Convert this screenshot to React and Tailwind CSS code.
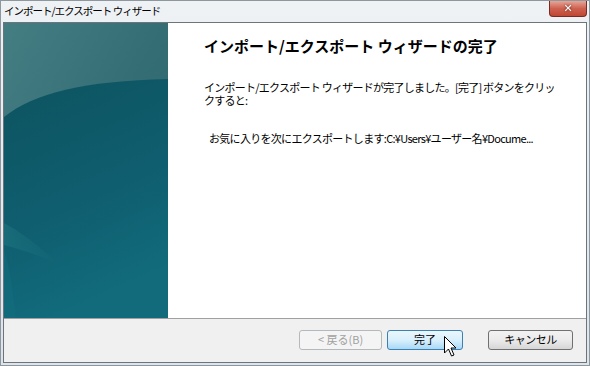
import React from "react";

const jp = { fontFamily: '"Noto Sans CJK JP", "Noto Sans", sans-serif' };

const WizardArt = () => (
  <svg viewBox="0 0 164 295" preserveAspectRatio="none" className="block w-full h-full">
    <defs>
      <linearGradient id="sky" x1="0" y1="0" x2="1" y2="1">
        <stop offset="0" stopColor="#447e83" />
        <stop offset="0.5" stopColor="#356d74" />
        <stop offset="1" stopColor="#2a636c" />
      </linearGradient>
      <linearGradient id="sea" x1="0" y1="0" x2="0.3" y2="1">
        <stop offset="0" stopColor="#0d5360" />
        <stop offset="0.6" stopColor="#0f5e6f" />
        <stop offset="1" stopColor="#116b7b" />
      </linearGradient>
      <linearGradient id="glow" x1="0" y1="0" x2="1" y2="0">
        <stop offset="0" stopColor="#2a848b" stopOpacity="0.35" />
        <stop offset="1" stopColor="#2a848b" stopOpacity="0" />
      </linearGradient>
    </defs>
    <rect width="164" height="295" fill="url(#sky)" />
    <path d="M0,94 C30,70 80,58 164,56 L164,295 L0,295 Z" fill="url(#sea)" />
    <path d="M0,200 C18,210 34,222 56,242 C34,232 16,226 0,222 Z" fill="url(#glow)" />
    <path d="M0,226 C8,255 10,278 12,295 L0,295 Z" fill="#137480" opacity="0.35" />
  </svg>
);

const Cursor = () => (
  <svg width="13" height="21" viewBox="0 0 13 21" className="absolute left-[443px] top-[335px]">
    <path d="M0.5,0.5 L0.5,17 L4.5,13 L7.5,20 L10,19 L7,12 L12,12 Z" fill="#fff" stroke="#000" strokeWidth="1" strokeLinejoin="miter" />
  </svg>
);

export default function App() {
  return (
    <div className="relative w-[590px] h-[366px] flex flex-col bg-gradient-to-b from-[#eef2f5] to-[#dde4ea] border border-[#8f979e]" style={jp}>
      <div className="h-[21px] flex items-start justify-between pl-[3px]">
        <span className="text-[10.5px] leading-[20px] text-black tracking-[-1px] whitespace-nowrap">インポート/エクスポート ウィザード</span>
        <div className="mr-[2px] w-[38px] h-[16px] rounded-b-[4px] border border-t-0 border-[#7a2a22] bg-gradient-to-b from-[#e6a597] via-[#cd6150] to-[#c04632] flex items-center justify-center">
          <span className="text-white text-[11px] font-bold leading-none drop-shadow-[0_0_1px_#5a1a12]" style={{ fontFamily: '"DejaVu Sans", sans-serif' }}>✕</span>
        </div>
      </div>
      <div className="flex-1 mx-[2px] mb-[2px] border border-[#6d757c] bg-white flex flex-col">
        <div className="flex-1 flex">
          <div className="w-[164px]">
            <WizardArt />
          </div>
          <div className="flex-1 pl-[36px] pt-[13px] text-black">
            <h1 className="text-[15px] font-bold leading-[20px] whitespace-nowrap">インポート/エクスポート ウィザードの完了</h1>
            <p className="mt-[25px] text-[11px] leading-[13px] tracking-[-0.75px] whitespace-nowrap">
              <span className="block">インポート/エクスポート ウィザードが完了しました。[完了] ボタンをクリッ</span>
              <span className="block">クすると:</span>
            </p>
            <p className="mt-[25px] pl-[5px] text-[11px] leading-[13px] tracking-[-0.7px] whitespace-nowrap">
              お気に入りを次にエクスポートします:C:¥Users¥ユーザー名¥Docume...
            </p>
          </div>
        </div>
        <div className="h-[44px] border-t border-[#a0a0a0] bg-[#f0f0f0] flex items-center justify-end pr-[13px] pb-[2px]">
          <button className="w-[83px] h-[20px] rounded-[3px] border border-[#b4b9bd] bg-[#f4f4f4] text-[11px] text-[#a0a0a0] leading-none">
            &lt; 戻る(B)
          </button>
          <button className="ml-[5px] w-[76px] h-[20px] rounded-[3px] border border-[#3c7fb1] bg-gradient-to-b from-[#eaf6fd] via-[#d9f0fc] to-[#a8d8f6] text-[11px] text-black leading-none">
            完了
          </button>
          <button className="ml-[25px] w-[85px] h-[20px] rounded-[3px] border border-[#707070] bg-gradient-to-b from-[#f2f2f2] via-[#ebebeb] to-[#d6d6d6] text-[11px] text-black leading-none tracking-[-0.5px]">
            キャンセル
          </button>
        </div>
      </div>
      <Cursor />
    </div>
  );
}
